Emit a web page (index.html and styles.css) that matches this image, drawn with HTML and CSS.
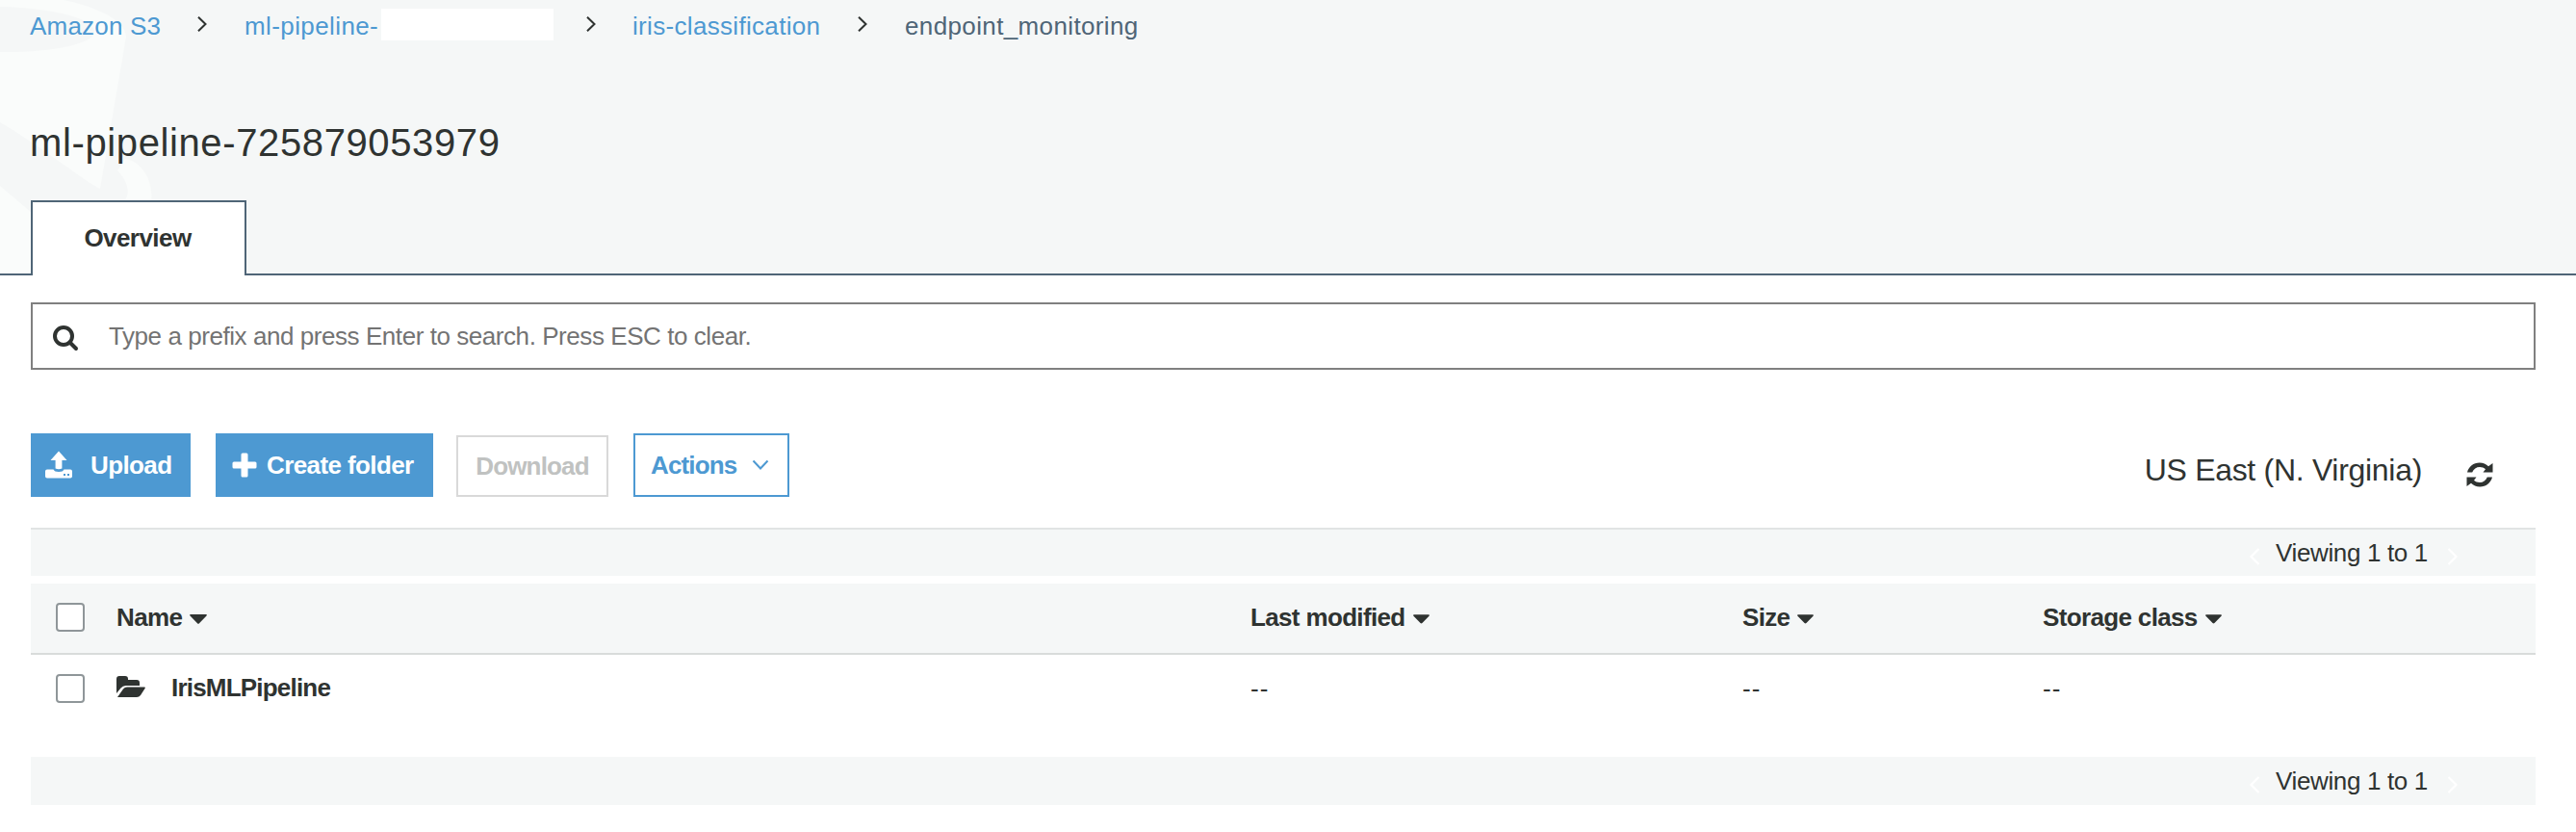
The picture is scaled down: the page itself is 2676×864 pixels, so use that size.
FILE: index.html
```html
<!DOCTYPE html>
<html lang="en">
<head>
<meta charset="utf-8">
<title>Amazon S3</title>
<link rel="stylesheet" href="styles.css">
</head>
<body>
<header class="top">
  <svg class="bucket" width="160" height="284" viewBox="0 0 160 284" aria-hidden="true">
    <path fill="#fafcfb" d="M0 0H66C96 6 131 20 131 38L104 196C90 190 40 150 0 127V54C50 55 98 46 98 33C98 18 50 8 0 7Z"/>
    <path fill="#fafcfb" d="M0 193L32 220V284H0ZM130 165C150 168 160 192 157 210H128C136 202 134 190 122 177Z"/>
  </svg>
  <nav class="crumbs">
    <a class="crumb c1">Amazon S3</a>
    <svg class="sep" width="10" height="16" viewBox="0 0 10 16"><path d="M1 .7 8.5 8 1 15.3"/></svg>
    <a class="crumb c2">ml-pipeline-</a>
    <span class="mask"></span>
    <svg class="sep" width="10" height="16" viewBox="0 0 10 16"><path d="M1 .7 8.5 8 1 15.3"/></svg>
    <a class="crumb c3">iris-classification</a>
    <svg class="sep" width="10" height="16" viewBox="0 0 10 16"><path d="M1 .7 8.5 8 1 15.3"/></svg>
    <span class="crumb current">endpoint_monitoring</span>
  </nav>
  <h1 class="title">ml-pipeline-725879053979</h1>
  <div class="tabs"><div class="tab"><span>Overview</span></div><div class="tabline"></div></div>
</header>
<main class="main">
  <div class="search">
    <svg width="28" height="28" viewBox="0 0 28 28"><circle cx="12" cy="12" r="9" fill="none" stroke="#2f3331" stroke-width="4"/><path d="M18.500 18.500 25 25" stroke="#2f3331" stroke-width="4" stroke-linecap="round"/></svg>
    <span class="hint">Type a prefix and press Enter to search. Press ESC to clear.</span>
  </div>
  <div class="toolbar">
    <button class="btn primary upload">
      <svg width="28" height="30" viewBox="0 0 28 30"><path fill="#fff" d="M14 .5 22.500 10H17.400V18.500Q14 20 10.600 18.500V10H5.500Z"/><path fill="#fff" d="M2 19.500H8.500Q9.500 22 14 22T19.500 19.500H26Q28 19.500 28 21.500V26.500Q28 28.500 26 28.500H2Q0 28.500 0 26.500V21.500Q0 19.500 2 19.500Z"/><path fill="#4d99d2" d="M19 24h2v2h-2zM23 24h2v2h-2z"/></svg>
      <span>Upload</span>
    </button>
    <button class="btn primary create">
      <svg width="26" height="26" viewBox="0 0 26 26"><path d="M9.500 2Q9.500 .5 11 .5H15Q16.500 .5 16.500 2V9.500H24Q25.500 9.500 25.500 11V15Q25.500 16.500 24 16.500H16.500V24Q16.500 25.500 15 25.500H11Q9.500 25.500 9.500 24V16.500H2Q.5 16.500 .5 15V11Q.5 9.500 2 9.500H9.500Z" fill="#fff"/></svg>
      <span>Create folder</span>
    </button>
    <button class="btn download" disabled><span>Download</span></button>
    <button class="btn actions">
      <span>Actions</span>
      <svg width="18" height="12" viewBox="0 0 18 12"><path d="M1.500 1.500 9 9.500 16.500 1.500" fill="none" stroke="#4d99d2" stroke-width="2"/></svg>
    </button>
    <div class="region"><span>US East (N. Virginia)</span>
      <svg width="28" height="26" viewBox="0 0 28 26" fill="#2f3331"><path d="M1 10.500C2.500 4.500 7.500 .5 13.800 .5C17.500 .5 20.700 1.900 23 4.200L27.500 1V10.500H17.500L20 7.200C18.400 5.700 16.300 5 14 5C10.500 5 7.500 7 6.200 10.500Z"/><path d="M27 15.500C25.500 21.500 20.500 25.500 14.200 25.500C10.500 25.500 7.300 24.100 5 21.800L.5 25V15.500H10.500L8 18.800C9.600 20.300 11.700 21 14 21C17.500 21 20.500 19 21.800 15.500Z"/></svg>
    </div>
  </div>
  <div class="pager first"><svg class="pg" width="12" height="20" viewBox="0 0 12 20"><path d="M10.500 2 2.500 10 10.500 18"/></svg><span>Viewing 1 to 1</span><svg class="pg" width="12" height="20" viewBox="0 0 12 20"><path d="M1.500 2 9.500 10 1.500 18"/></svg></div>
  <div class="grid head">
    <i class="check"></i>
    <div class="cell name"><span class="t-name">Name</span><svg class="tri" width="18" height="10" viewBox="0 0 18 10"><path d="M1 0H17Q18.500 .5 17.500 1.500L10 9.300Q9 10.300 8 9.300L.5 1.500Q-.5 .5 1 0Z"/></svg></div>
    <div class="cell"><span class="t-mod">Last modified</span><svg class="tri" width="17" height="10" viewBox="0 0 18 10"><path d="M1 0H17Q18.500 .5 17.500 1.500L10 9.300Q9 10.300 8 9.300L.5 1.500Q-.5 .5 1 0Z"/></svg></div>
    <div class="cell"><span class="t-size">Size</span><svg class="tri" width="17" height="10" viewBox="0 0 18 10"><path d="M1 0H17Q18.500 .5 17.500 1.500L10 9.300Q9 10.300 8 9.300L.5 1.500Q-.5 .5 1 0Z"/></svg></div>
    <div class="cell"><span class="t-class">Storage class</span><svg class="tri" width="17" height="10" viewBox="0 0 18 10"><path d="M1 0H17Q18.500 .5 17.500 1.500L10 9.300Q9 10.300 8 9.300L.5 1.500Q-.5 .5 1 0Z"/></svg></div>
  </div>
  <div class="grid row">
    <i class="check"></i>
    <div class="cell name"><svg class="folder" width="30" height="22" viewBox="0 0 30 22" fill="#2f3331"><path d="M0 18V3Q0 0 3 0H9Q12 0 12 3V4H21Q24 4 24 7V10H9.500Q6.500 10 4.500 12.500Z"/><path d="M1 22 7 13.500Q8.500 11.500 11 11.500H29Q30.500 11.500 29.500 13L25 20Q23.500 22 21 22Z"/></svg><span class="t-file">IrisMLPipeline</span></div>
    <div class="cell dash">--</div>
    <div class="cell dash">--</div>
    <div class="cell dash">--</div>
  </div>
  <div class="pager last"><svg class="pg" width="12" height="20" viewBox="0 0 12 20"><path d="M10.500 2 2.500 10 10.500 18"/></svg><span>Viewing 1 to 1</span><svg class="pg" width="12" height="20" viewBox="0 0 12 20"><path d="M1.500 2 9.500 10 1.500 18"/></svg></div>
</main>
</body>
</html>
```
FILE: styles.css
```css
* { box-sizing: border-box; }
body { margin: 0; width: 2676px; height: 864px; overflow: hidden; background: #fff; color: #2f3331; font: 26px/30px "Liberation Sans", Arial, sans-serif; white-space: nowrap; }
svg { display: block; flex: none; }
.top { position: relative; height: 286px; background: #f5f7f7; display: flex; flex-direction: column; }
.bucket { position: absolute; left: 0; top: 0; }
.crumbs { position: relative; height: 52px; padding-left: 31px; display: flex; align-items: flex-start; }
.crumb { flex: none; margin-top: 12px; color: #4d99d2; }
.c1 { width: 174px; letter-spacing: .2px; }
.c2 { width: 142px; letter-spacing: .4px; }
.c3 { width: 234px; letter-spacing: .32px; }
.crumb.current { color: #4f6577; letter-spacing: .37px; }
.sep { margin-top: 17px; fill: none; stroke: #2f3331; stroke-width: 2; }
.sep + .crumb { margin-left: 39px; }
.sep + .c3 { margin-left: 38px; }
.mask { width: 179px; height: 33px; margin: 9px 34px 0 0; background: #fff; }
.title { position: relative; margin: 73px 0 0 31px; font-size: 40px; line-height: 46px; font-weight: 400; letter-spacing: .62px; }
.tabs { position: relative; margin-top: auto; height: 78px; padding-left: 32px; display: flex; align-items: flex-end; }
.tabs::before { content: ""; width: 32px; height: 2px; margin-left: -32px; background: #4f6577; }
.tab { width: 224px; height: 78px; padding: 22px 2px 0 0; text-align: center; font-weight: 700; letter-spacing: -.55px; background: #fff; border: 2px solid #4f6577; border-bottom: 0; }
.tabline { flex: 1; height: 2px; background: #4f6577; }
.main { padding: 28px 42px 0 32px; }
.search { height: 70px; border: 2px solid #808080; display: flex; align-items: center; padding-left: 20px; color: #737373; }
.search svg { margin-top: 4px; }
.hint { margin-left: 31px; letter-spacing: -.44px; }
.toolbar { height: 98px; margin-top: 66px; display: flex; align-items: flex-start; }
.btn { height: 66px; padding: 0; display: flex; align-items: center; font: 700 26px/30px "Liberation Sans", Arial, sans-serif; letter-spacing: -.6px; border: 2px solid #4d99d2; background: #fff; color: #4d99d2; white-space: nowrap; }
.btn span { margin-top: -1px; }
.primary { background: #4d99d2; color: #fff; }
.upload { width: 166px; padding-left: 13px; gap: 19px; }
.create { width: 226px; padding-left: 15px; margin-left: 26px; gap: 10px; }
.download { width: 158px; height: 64px; margin: 2px 0 0 24px; justify-content: center; border-color: #d9d9d9; color: #c0c2c1; letter-spacing: -.85px; }
.actions { width: 162px; margin-left: 26px; padding-left: 16px; gap: 16px; letter-spacing: -.85px; }
.region { margin-left: auto; padding: 20px 44px 0 0; display: flex; font-size: 32px; line-height: 37px; letter-spacing: -.3px; }
.region svg { margin: 10px 0 0 46px; }
.pager { height: 50px; background: #f5f7f7; display: flex; padding-left: 2304px; align-items: center; }
.pager span { width: 178px; margin-left: 16px; letter-spacing: -.36px; }
.pg { fill: none; stroke: #fff; stroke-width: 2.200; margin-top: 8px; }
.first { border-top: 2px solid #e1e4e4; }
.grid { display: grid; grid-template-columns: 89px 1178px 511px 312px 1fr; }
.head { height: 74px; margin-top: 8px; background: #f5f7f7; border-bottom: 2px solid #d9dcdb; font-weight: 700; letter-spacing: -.65px; }
.row { height: 106px; }
.check { width: 30px; height: 30px; margin: 20px 0 0 26px; background: #fff; border: 2px solid #8f9699; border-radius: 4px; }
.cell { display: flex; align-items: flex-start; padding-top: 20px; }
.tri { fill: #2f3331; margin: 12px 0 0 8px; }
.folder { margin-top: 2px; }
.t-file { margin: -1px 0 0 27px; font-weight: 700; letter-spacing: -.8px; }
.dash { padding-top: 20px; letter-spacing: 1.2px; }
```
